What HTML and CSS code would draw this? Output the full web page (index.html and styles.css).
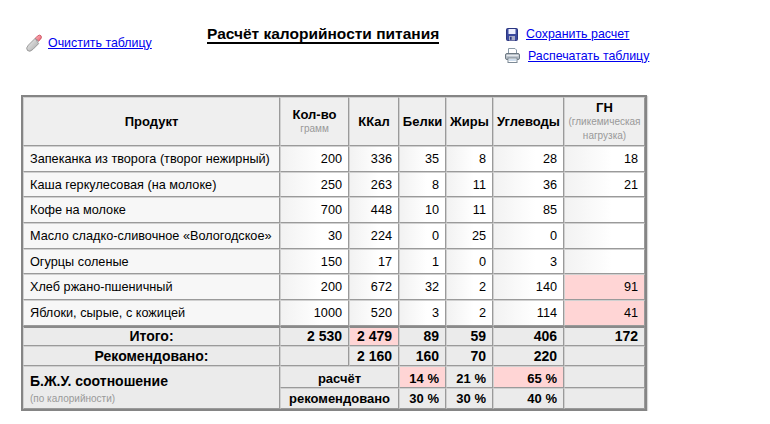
FILE: index.html
```html
<!DOCTYPE html>
<html lang="ru">
<head>
<meta charset="utf-8">
<title>Расчёт калорийности питания</title>
<link rel="stylesheet" href="styles.css">
</head>
<body>
<div class="page">
  <div class="top">
    <div class="left-tool">
      <a class="tool" href="#">
        <svg class="ico eraser" viewBox="0 0 17 18" width="17" height="18">
          <defs>
            <linearGradient id="eb" x1="0" y1="0" x2="1" y2="1">
              <stop offset="0" stop-color="#f6f6f6"/>
              <stop offset="1" stop-color="#a4a4a4"/>
            </linearGradient>
            <linearGradient id="et" x1="0" y1="0" x2="1" y2="1">
              <stop offset="0" stop-color="#ffc0c6"/>
              <stop offset="1" stop-color="#e65a6a"/>
            </linearGradient>
          </defs>
          <path d="M10.2 4.3 L3.4 11.1 Q0.3 14.3 2.5 16.5 Q4.7 18.6 7.9 15.4 L13.6 9.7 Z" fill="url(#eb)" stroke="#8c8c8c" stroke-width="0.8"/>
          <path d="M10.2 4.3 L12.4 2.1 Q14.5 0.2 16.0 1.8 Q17.3 3.4 15.3 5.5 L13.6 7.2 Z" fill="url(#et)" stroke="#c84a5a" stroke-width="0.8"/>
          <path d="M10.2 4.3 L13.6 7.4" stroke="#9a9a9a" stroke-width="0.8"/>
        </svg>
        <span class="lnk">Очистить таблицу</span>
      </a>
    </div>
    <div class="title-box">
      <h1 class="title">Расчёт калорийности питания</h1>
    </div>
    <div class="right-tools">
      <a class="tool" href="#">
        <svg class="ico" viewBox="0 0 12 13" width="12" height="13">
          <rect x="0.5" y="0.5" width="11" height="12" rx="1" fill="#3b4a9e" stroke="#2a3580"/>
          <rect x="2.5" y="1" width="7" height="5" fill="#eef0ff"/>
          <rect x="3" y="8" width="6" height="4.5" fill="#a8acc8"/>
          <rect x="4" y="8.8" width="1.6" height="3" fill="#2a3580"/>
        </svg>
        <span class="lnk">Сохранить расчет</span>
      </a>
      <a class="tool" href="#">
        <svg class="ico" viewBox="0 0 15 15" width="15" height="15">
          <path d="M3.5 0.5 H10 L11.5 2 V6 H3.5 Z" fill="#ffffff" stroke="#8a9aa8"/>
          <rect x="0.5" y="5.5" width="14" height="6" rx="1.5" fill="#b8c0c8" stroke="#6d7882"/>
          <rect x="1.5" y="7" width="12" height="1.2" fill="#e6eaee"/>
          <rect x="3" y="10" width="9" height="4.5" fill="#ffffff" stroke="#7d8a96"/>
          <rect x="4" y="11.6" width="7" height="0.8" fill="#8ab0d8"/>
        </svg>
        <span class="lnk">Распечатать таблицу</span>
      </a>
    </div>
  </div>

  <table class="calc">
    <thead>
      <tr>
        <th class="c-prod">Продукт</th>
        <th class="c-qty">Кол-во<span class="sub">грамм</span></th>
        <th class="c-kcal">ККал</th>
        <th class="c-b">Белки</th>
        <th class="c-z">Жиры</th>
        <th class="c-u">Углеводы</th>
        <th class="c-gn">ГН<span class="sub">(гликемическая нагрузка)</span></th>
      </tr>
    </thead>
    <tbody>
      <tr class="row"><td class="prod">Запеканка из творога (творог нежирный)</td><td class="num">200</td><td class="num">336</td><td class="num">35</td><td class="num">8</td><td class="num">28</td><td class="num">18</td></tr>
      <tr class="row"><td class="prod">Каша геркулесовая (на молоке)</td><td class="num">250</td><td class="num">263</td><td class="num">8</td><td class="num">11</td><td class="num">36</td><td class="num">21</td></tr>
      <tr class="row"><td class="prod">Кофе на молоке</td><td class="num">700</td><td class="num">448</td><td class="num">10</td><td class="num">11</td><td class="num">85</td><td class="num"></td></tr>
      <tr class="row"><td class="prod">Масло сладко-сливочное «Вологодское»</td><td class="num">30</td><td class="num">224</td><td class="num">0</td><td class="num">25</td><td class="num">0</td><td class="num"></td></tr>
      <tr class="row"><td class="prod">Огурцы соленые</td><td class="num">150</td><td class="num">17</td><td class="num">1</td><td class="num">0</td><td class="num">3</td><td class="num"></td></tr>
      <tr class="row"><td class="prod">Хлеб ржано-пшеничный</td><td class="num">200</td><td class="num">672</td><td class="num">32</td><td class="num">2</td><td class="num">140</td><td class="num warn">91</td></tr>
      <tr class="row"><td class="prod">Яблоки, сырые, с кожицей</td><td class="num">1000</td><td class="num">520</td><td class="num">3</td><td class="num">2</td><td class="num">114</td><td class="num warn">41</td></tr>
    </tbody>
    <tbody class="totals">
      <tr class="tot first">
        <td class="lbl">Итого:</td><td class="num">2 530</td><td class="num warn">2 479</td><td class="num">89</td><td class="num">59</td><td class="num">406</td><td class="num">172</td>
      </tr>
      <tr class="tot">
        <td class="lbl">Рекомендовано:</td><td class="num"></td><td class="num">2 160</td><td class="num">160</td><td class="num">70</td><td class="num">220</td><td class="num"></td>
      </tr>
      <tr class="ratio r1">
        <td class="bju" rowspan="2"><span class="bju-t">Б.Ж.У. соотношение</span><span class="sub left">(по калорийности)</span></td>
        <td class="mid" colspan="2">расчёт</td><td class="num warn">14 %</td><td class="num">21 %</td><td class="num warn">65 %</td><td class="num"></td>
      </tr>
      <tr class="ratio r2">
        <td class="mid" colspan="2">рекомендовано</td><td class="num">30 %</td><td class="num">30 %</td><td class="num">40 %</td><td class="num"></td>
      </tr>
    </tbody>
  </table>
</div>
</body>
</html>
```

FILE: styles.css
```css
html, body {
  margin: 0;
  padding: 0;
  background: #ffffff;
}

body {
  font-family: "Liberation Sans", Arial, sans-serif;
  font-size: 12.7px;
  color: #000;
}

.page {
  padding: 0 0 0 21px;
}

.top {
  display: flex;
  align-items: flex-start;
  height: 95px;
}

.left-tool {
  width: 182px;
  padding: 34px 0 0 4px;
}

.tool {
  display: flex;
  align-items: center;
  text-decoration: none;
  color: #0000ee;
}

.ico {
  flex: none;
  margin-right: 7px;
}

.eraser {
  margin-right: 6px;
}

.lnk {
  text-decoration: underline;
  color: #0000ee;
  font-size: 12.4px;
}

.title-box {
  width: 298px;
  padding-top: 25px;
}

.title {
  display: inline-block;
  margin: 0;
  font-size: 15.5px;
  font-weight: bold;
  line-height: 17px;
  border-bottom: 2px solid #000;
  padding-bottom: 0;
}

.right-tools {
  display: flex;
  flex-direction: column;
  gap: 7px;
  padding-top: 27px;
}

.right-tools .tool:first-child .ico {
  margin-right: 8px;
  margin-left: 1px;
}

.right-tools .tool:last-child .ico {
  margin-right: 8px;
}

/* table */
.calc {
  border-collapse: separate;
  border-spacing: 0;
  border: 2px solid #858585;
  box-shadow: 1px 1px 1px #d8d8d8;
  width: 626px;
  table-layout: fixed;
}

.calc th,
.calc td {
  border-style: solid;
  border-width: 1px;
  border-color: #d0d0d0 #9a9a9a #9a9a9a #d0d0d0;
  padding: 0 6px;
}

.calc th {
  box-sizing: border-box;
  background: #efefef;
  font-weight: bold;
  font-size: 13px;
  height: 49px;
  text-align: center;
  vertical-align: middle;
  line-height: 15px;
  padding: 0 2px;
}

.calc th.c-prod { width: 257px; }
.calc th.c-qty { width: 69px; }
.calc th.c-kcal { width: 50px; }
.calc th.c-b { width: 47px; }
.calc th.c-z { width: 47px; }
.calc th.c-u { width: 71px; }
.calc th.c-gn { width: 81px; }

.sub {
  display: block;
  font-weight: normal;
  font-size: 10px;
  color: #999999;
  line-height: 14px;
}

.sub.left {
  margin-top: 3px;
}

.row td {
  height: 23.7px;
  background: #f7f7f7;
}

.row td.num {
  background: linear-gradient(to right, #f2f2f2, #ffffff 60%);
}

.num {
  text-align: right;
  vertical-align: middle;
  white-space: nowrap;
}

.prod {
  text-align: left;
  white-space: nowrap;
}

.calc td.warn,
.row td.warn {
  background: #ffd5d5;
}

.totals td {
  background: #ebebeb;
  font-weight: bold;
  font-size: 14px;
}

.tot.first td {
  border-top: 2px solid #8a8a8a;
  height: 17px;
}

.tot td {
  height: 18px;
}

.tot td.lbl {
  text-align: center;
}

.ratio td {
  height: 18px;
}

.r1 td {
  height: 17px;
  padding-top: 3px;
}

.r2 td {
  height: 19px;
}

.ratio td.mid {
  text-align: center;
  font-size: 13px;
}

.ratio td.num {
  font-size: 13px;
}

.calc td.bju {
  text-align: left;
  vertical-align: top;
  padding-top: 6px;
}

.bju-t {
  display: block;
  font-size: 14px;
  line-height: 16px;
}
```
